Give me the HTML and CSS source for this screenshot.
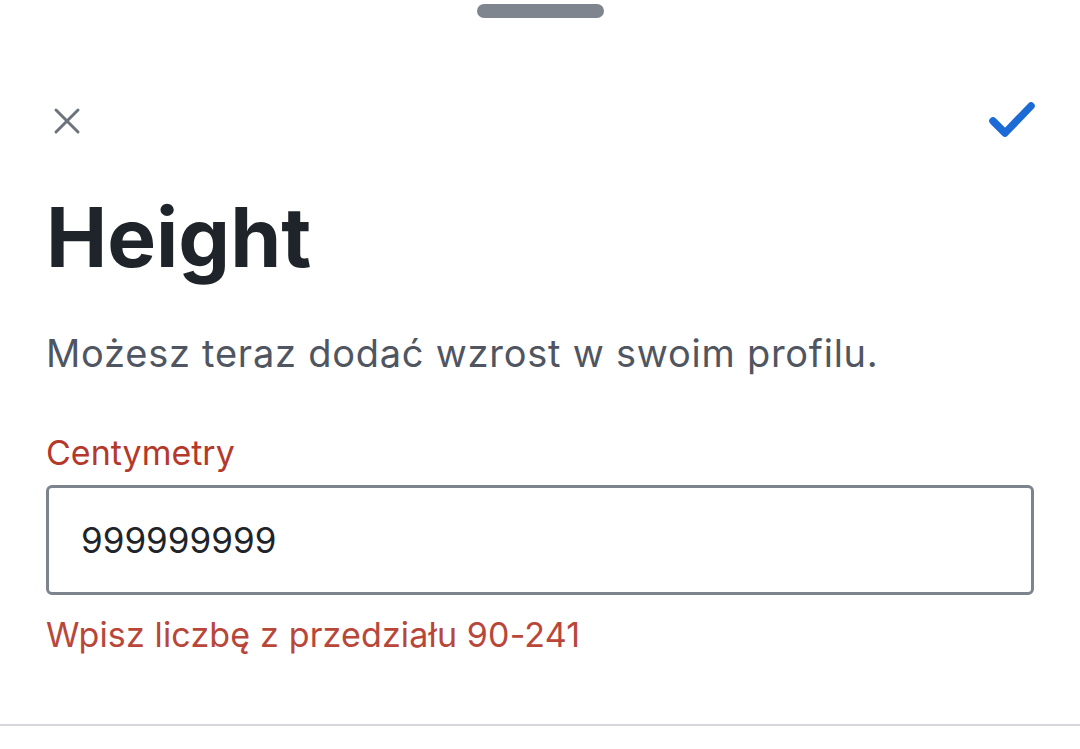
FILE: index.html
```html
<!DOCTYPE html>
<html lang="pl">
<head>
<meta charset="utf-8">
<link rel="stylesheet" href="styles.css">
</head>
<body>
<div class="sheet">
  <div class="handle-row"><div class="handle"></div></div>
  <div class="toolbar">
    <svg class="icon-close" width="28" height="28" viewBox="0 0 28 28"><path d="M3 3 L25 25 M25 3 L3 25" stroke="#6c737d" stroke-width="3" stroke-linecap="round" fill="none"/></svg>
    <svg class="icon-check" width="48" height="42" viewBox="0 0 48 42"><path d="M5 21 L17 33 L43 6" stroke="#1b6ad5" stroke-width="7.5" stroke-linecap="round" stroke-linejoin="round" fill="none"/></svg>
  </div>
  <h1 class="title">Height</h1>
  <p class="subtitle">Możesz teraz dodać wzrost w swoim profilu.</p>
  <div class="field">
    <label class="field-label">Centymetry</label>
    <div class="field-input">999999999</div>
    <div class="field-error">Wpisz liczbę z przedziału 90-241</div>
  </div>
  <div class="divider"></div>
</div>
</body>
</html>
```
FILE: styles.css
```css
html, body {
  margin: 0;
  padding: 0;
  background: #ffffff;
}
body {
  font-family: "Inter", "Noto Sans", sans-serif;
  width: 1080px;
  height: 749px;
  overflow: hidden;
}
.sheet {
  display: flex;
  flex-direction: column;
}
.handle-row {
  display: flex;
  justify-content: center;
  padding-top: 4px;
}
.handle {
  width: 127px;
  height: 14px;
  border-radius: 7px;
  background: #7e858f;
  margin-left: 1px;
}
.toolbar {
  display: flex;
  justify-content: space-between;
  align-items: center;
  margin-top: 82px;
  padding: 0 44px 0 53px;
  height: 42px;
}
.title {
  margin: 55px 0 0 46px;
  font-size: 82px;
  font-weight: 700;
  color: #1f242b;
  line-height: 1;
}
.subtitle {
  margin: 55px 0 0 46px;
  font-size: 38px;
  letter-spacing: 0.75px;
  color: #4f5661;
  line-height: 1;
}
.field {
  display: flex;
  flex-direction: column;
  padding: 0 46px;
  margin-top: 64px;
}
.field-label {
  font-size: 34px;
  color: #b5392b;
  line-height: 1;
}
.field-input {
  margin-top: 15px;
  height: 104px;
  border: 3px solid #7e848d;
  border-radius: 6px;
  display: flex;
  align-items: center;
  padding-left: 32px;
  font-size: 35px;
  color: #1f242b;
}
.field-error {
  margin-top: 23px;
  font-size: 34px;
  letter-spacing: 0.15px;
  color: #b8473a;
  line-height: 1;
}
.divider {
  margin-top: 72px;
  height: 2px;
  background: #d6d6dc;
}
```
